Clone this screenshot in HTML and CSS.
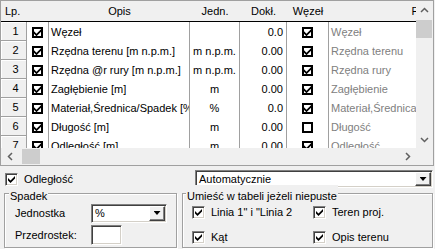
FILE: index.html
```html
<!DOCTYPE html>
<html lang="pl">
<head>
    <meta charset="UTF-8">
    <title>Opisy kolumn</title>
    <link rel="stylesheet" href="styles.css">
</head>
<body>

<div class="grid">
    <div class="view">
        <table class="data">
            <tr>
                <th class="c-lp">Lp.</th>
                <th class="c-chk"></th>
                <th class="c-opis">Opis</th>
                <th class="c-jedn">Jedn.</th>
                <th class="c-dokl">Dokł.</th>
                <th class="c-wezel">Węzeł</th>
                <th class="c-fmt">Format</th>
            </tr>
            <tr>
                <td class="num">1</td>
                <td class="chk"><span class="tick on"></span></td>
                <td>Węzeł</td>
                <td class="jedn"></td>
                <td class="dokl">0.0</td>
                <td class="chk"><span class="tick on"></span></td>
                <td class="fmt">Węzeł</td>
            </tr>
            <tr>
                <td class="num">2</td>
                <td class="chk"><span class="tick on"></span></td>
                <td>Rzędna terenu [m n.p.m.]</td>
                <td class="jedn">m n.p.m.</td>
                <td class="dokl">0.00</td>
                <td class="chk"><span class="tick on"></span></td>
                <td class="fmt">Rzędna terenu</td>
            </tr>
            <tr>
                <td class="num">3</td>
                <td class="chk"><span class="tick on"></span></td>
                <td>Rzędna @r rury [m n.p.m.]</td>
                <td class="jedn">m n.p.m.</td>
                <td class="dokl">0.00</td>
                <td class="chk"><span class="tick on"></span></td>
                <td class="fmt">Rzędna rury</td>
            </tr>
            <tr>
                <td class="num">4</td>
                <td class="chk"><span class="tick on"></span></td>
                <td>Zagłębienie [m]</td>
                <td class="jedn">m</td>
                <td class="dokl">0.00</td>
                <td class="chk"><span class="tick on"></span></td>
                <td class="fmt">Zagłębienie</td>
            </tr>
            <tr>
                <td class="num">5</td>
                <td class="chk"><span class="tick on"></span></td>
                <td>Materiał,Średnica/Spadek [%]</td>
                <td class="jedn">%</td>
                <td class="dokl">0.0</td>
                <td class="chk"><span class="tick on"></span></td>
                <td class="fmt">Materiał,Średnica/Spadek</td>
            </tr>
            <tr>
                <td class="num">6</td>
                <td class="chk"><span class="tick on"></span></td>
                <td>Długość [m]</td>
                <td class="jedn">m</td>
                <td class="dokl">0.00</td>
                <td class="chk"><span class="tick"></span></td>
                <td class="fmt">Długość</td>
            </tr>
            <tr>
                <td class="num">7</td>
                <td class="chk"><span class="tick on"></span></td>
                <td>Odległość [m]</td>
                <td class="jedn">m</td>
                <td class="dokl">0.00</td>
                <td class="chk"><span class="tick on"></span></td>
                <td class="fmt">Odległość</td>
            </tr>
        </table>
    </div>
    <div class="vscroll">
        <div class="arrow"><svg width="9" height="6"><path d="M1 5 L4.5 1.5 L8 5" /></svg></div>
        <div class="vthumb"></div>
        <div class="arrow end"><svg width="9" height="6"><path d="M1 1 L4.5 4.5 L8 1" /></svg></div>
    </div>
    <div class="hscroll">
        <div class="arrow"><svg width="6" height="9"><path d="M5 1 L1.5 4.5 L5 8" /></svg></div>
        <div class="hthumb"></div>
        <div class="arrow end"><svg width="6" height="9"><path d="M1 1 L4.5 4.5 L1 8" /></svg></div>
    </div>
    <div class="corner"></div>
</div>

<div class="options">
    <label class="check"><span class="cb on"></span>Odległość</label>
    <div class="combo wide">Automatycznie<span class="drop"></span></div>
</div>

<div class="groups">
    <fieldset class="group spadek">
        <legend>Spadek</legend>
        <div class="field">
            <label>Jednostka</label>
            <div class="combo small">%<span class="drop"></span></div>
        </div>
        <div class="field">
            <label>Przedrostek:</label>
            <div class="text-input"></div>
        </div>
    </fieldset>
    <fieldset class="group umiesc">
        <legend>Umieść w tabeli jeżeli niepuste</legend>
        <div class="checks">
            <label class="check"><span class="cb on"></span>Linia 1" i "Linia 2</label>
            <label class="check"><span class="cb on"></span>Teren proj.</label>
            <label class="check"><span class="cb on"></span>Kąt</label>
            <label class="check"><span class="cb on"></span>Opis terenu</label>
        </div>
    </fieldset>
</div>

</body>
</html>
```

FILE: styles.css
```css
body {
    margin: 0;
    width: 435px;
    height: 249px;
    overflow: hidden;
    background-color: #f0f0f0;
    color: #000;
    font-family: "Liberation Sans", Arial, sans-serif;
    font-size: 11px;
}

/* grid with scrollbars */
.grid {
    width: 434px;
    box-sizing: border-box;
    display: grid;
    grid-template-columns: 1fr 17px;
    grid-template-rows: 147px 17px;
    border: 1px solid #a0a0a0;
}
.view {
    overflow: hidden;
    background-color: #fff;
}
.data {
    border-collapse: separate;
    border-spacing: 0;
    table-layout: fixed;
    width: 528px;
}
.data th {
    height: 21px;
    box-sizing: border-box;
    padding: 0;
    border-bottom: 1px solid #000;
    background-color: #f0f0f0;
    font-weight: normal;
    text-align: center;
    white-space: nowrap;
    overflow: hidden;
}
.data th.c-lp {
    text-align: left;
    padding-left: 4px;
}
.c-lp { width: 26px; }
.c-chk { width: 22px; }
.c-opis { width: 141px; }
.c-jedn { width: 50px; }
.c-dokl { width: 47px; }
.c-wezel { width: 42px; }
.c-fmt { width: 200px; }

.data td {
    height: 19px;
    box-sizing: border-box;
    padding: 0 2px;
    border-right: 1px solid #a0a0a0;
    white-space: nowrap;
    overflow: hidden;
}
.data td.num {
    padding-left: 6px;
    background-color: #f0f0f0;
    border-bottom: 1px solid #a0a0a0;
    box-shadow: inset 1px 1px #fff;
    text-align: center;
}
.data td.chk {
    padding: 0;
    text-align: center;
}
.data td.jedn {
    text-align: center;
}
.data td.dokl {
    text-align: right;
    padding-right: 3px;
}
.data td.fmt {
    color: #808080;
    border-right: none;
}

.tick {
    display: inline-block;
    position: relative;
    width: 11px;
    height: 11px;
    box-sizing: border-box;
    border: 2px solid #000;
    background-color: #fff;
    vertical-align: middle;
}
.tick.on::after,
.cb.on::after {
    content: "";
    position: absolute;
    left: 0;
    top: 0;
    width: 7px;
    height: 7px;
    background-color: #000;
    clip-path: polygon(0 2.5px, 2.5px 5px, 7px 0.5px, 7px 3px, 2.5px 7.5px, 0 5px);
}

.vscroll,
.hscroll,
.corner {
    background-color: #f0f0f0;
}
.vscroll {
    display: flex;
    flex-direction: column;
}
.hscroll {
    display: flex;
}
.arrow {
    width: 17px;
    height: 17px;
    display: flex;
    align-items: center;
    justify-content: center;
    flex-shrink: 0;
}
.arrow path {
    fill: none;
    stroke: #606060;
    stroke-width: 1.5;
}
.vscroll .end {
    margin-top: auto;
}
.hscroll .end {
    margin-left: auto;
}
.vthumb {
    height: 18px;
    margin: 2px 1px 0 0;
    background-color: #cdcdcd;
}
.hthumb {
    width: 18px;
    margin: 1px 0 1px 4px;
    background-color: #cdcdcd;
}

/* form controls */
.check {
    display: flex;
    align-items: center;
    gap: 6px;
    white-space: nowrap;
}
.cb {
    position: relative;
    width: 13px;
    height: 13px;
    box-sizing: border-box;
    flex-shrink: 0;
    border: 1px solid;
    border-color: #808080 #fff #fff #808080;
    box-shadow: inset 1px 1px #404040, inset -1px -1px #d4d0c8;
    background-color: #fff;
}
.cb.on::after {
    left: 2px;
    top: 2px;
}
.combo {
    display: flex;
    align-items: center;
    box-sizing: border-box;
    padding-left: 3px;
    border: 1px solid;
    border-color: #808080 #fff #fff #808080;
    box-shadow: inset 1px 1px #404040, inset -1px -1px #d4d0c8;
    background-color: #fff;
}
.combo.wide {
    width: 238px;
    height: 18px;
}
.combo.small {
    width: 76px;
    height: 19px;
}
.drop {
    display: flex;
    align-items: center;
    justify-content: center;
    align-self: stretch;
    width: 16px;
    margin: 1px 1px 1px auto;
    box-sizing: border-box;
    border: 1px solid;
    border-color: #fff #404040 #404040 #fff;
    box-shadow: inset -1px -1px #808080;
    background-color: #f0f0f0;
}
.drop::after {
    content: "";
    width: 7px;
    height: 4px;
    background-color: #000;
    clip-path: polygon(0 0, 7px 0, 3.5px 4px);
}
.text-input {
    width: 31px;
    height: 20px;
    box-sizing: border-box;
    border: 1px solid;
    border-color: #808080 #fff #fff #808080;
    box-shadow: inset 1px 1px #404040, inset -1px -1px #d4d0c8;
    background-color: #fff;
}

.options {
    display: flex;
    align-items: center;
    justify-content: space-between;
    height: 18px;
    margin-top: 4px;
    padding: 0 2px 0 5px;
}

/* group boxes */
.groups {
    display: flex;
    gap: 5px;
    height: 63px;
    margin-top: -3px;
    padding: 0 2px 0 4px;
}
.group {
    margin: 0;
    min-width: 0;
    box-sizing: border-box;
    border: 1px solid #a0a0a0;
    box-shadow: inset 1px 1px #fff, 1px 1px #fff;
}
.group legend {
    margin-left: -6px;
    padding: 6px 1px 0;
    line-height: 11px;
    background-color: #f0f0f0;
}
.spadek {
    width: 173px;
    padding: 0 8px 0 10px;
}
.umiesc {
    flex: 1;
    padding: 0 4px 0 9px;
}
.field {
    display: flex;
    align-items: center;
    height: 22px;
}
.field label {
    width: 76px;
}
.checks {
    display: grid;
    grid-template-columns: 121px 1fr;
    grid-template-rows: 20px 20px;
    row-gap: 5px;
}
```
